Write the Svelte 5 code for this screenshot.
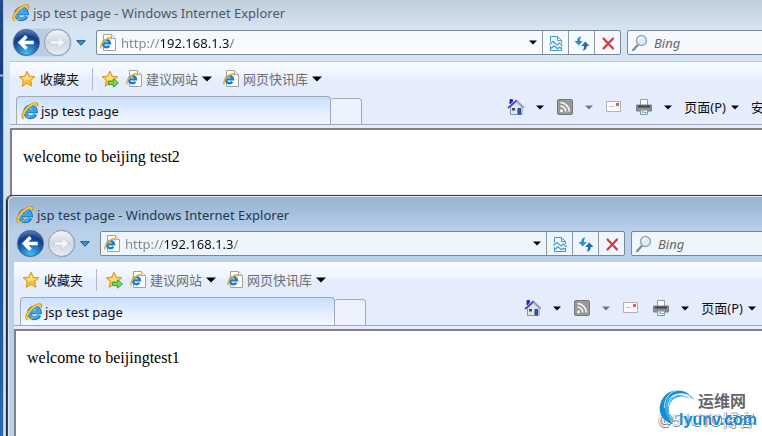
<script>
  const windows = [
    { id: 'back', title: 'jsp test page', url: 'http://192.168.1.3/', body: 'welcome to beijing test2', safety: true },
    { id: 'front', title: 'jsp test page', url: 'http://192.168.1.3/', body: 'welcome to beijingtest1', safety: false }
  ];
</script>

{#snippet ie()}
  <svg class="ie" viewBox="0 0 18 18" aria-hidden="true">
    <path d="M14.4 12.200A5.400 5.400 0 1 1 14.900 9.400H6" fill="none" stroke="#1b6fb8" stroke-width="3.800" />
    <path d="M14 12.200A5.200 5.200 0 1 1 14.600 9.200H6" fill="none" stroke="#35a8ee" stroke-width="2.600" />
    <path d="M2.800 16.300C-.8 14.500 4.500 5.800 10.500 2.700c3.800-2 6.400-1.700 5.300 1.600" fill="none" stroke="#c98f1a" stroke-width="2.600" />
    <path d="M2.800 16C0 14 5 5.800 10.700 2.800c3.500-1.800 5.500-1.500 4.800 1" fill="none" stroke="#ffca35" stroke-width="1.600" />
    <path d="M4.200 16.200c2-.3 3.500-1.300 4.800-2.600" fill="none" stroke="#e3a41f" stroke-width="1.200" />
  </svg>
{/snippet}

{#snippet pageIcon()}
  <svg class="doc" viewBox="0 0 16 17" aria-hidden="true">
    <path d="M3.500.5h8l4 4v12h-12z" fill="#fff" stroke="#a2a2a2" />
    <path d="M11.500.5v4h4" fill="#ececec" stroke="#aaa" />
    <path d="M9.300 11.800A3.600 3.600 0 1 1 10 9.400H4" fill="none" stroke="#1680cf" stroke-width="2.400" />
    <path d="M1.300 14.300C-.6 12.400 3.500 6.500 7.500 4.500c2.500-1.300 4-.8 3.300 1" fill="none" stroke="#efad20" stroke-width="1.500" />
  </svg>
{/snippet}

{#snippet star(add)}
  <svg class="star" viewBox="0 0 18 18" aria-hidden="true">
    <path d="M9 1.200l2.300 5 5.500.6-4.100 3.700 1.200 5.800L9 13.400l-4.900 2.900 1.200-5.800-4.100-3.700 5.500-.6z" fill="#ffc02f" stroke="#dd9420" stroke-linejoin="round" />
    <path d="M9 3.500l1.600 3.700 4 .5-4.300 2.300L9 9.500 6 11l.5-2L3.500 7.700l4-.5z" fill="#ffe48a" />
    {#if add}
      <path d="M7.500 11.200h5V8.700l5 4.200-5 4.200v-2.500h-5z" fill="#6cdb55" stroke="#3f9f38" />
    {/if}
  </svg>
{/snippet}

{#snippet caret(tone)}
  <svg class="caret {tone}" viewBox="0 0 10 6" aria-hidden="true"><path d="M0 .5h10L5 5.5z" /></svg>
{/snippet}

<main class="desktop">
  {#each windows as w (w.id)}
    <section class="window {w.id}" aria-label={w.title}>
      <header class="title">{@render ie()}<span>{w.title} - Windows Internet Explorer</span></header>

      <div class="nav">
        <div class="travel">
          <button class="round go" aria-label="Back">
            <svg viewBox="0 0 26 26"><path d="M13 6.500L6.500 13l6.500 6.500M7.500 13H20.500" fill="none" stroke="#fff" stroke-width="3.600" /></svg>
          </button>
          <button class="round off" aria-label="Forward">
            <svg viewBox="0 0 26 26"><path d="M5.500 11.200h8V6.700l7 6.300-7 6.300v-4.500h-8z" fill="#f4f6f8" stroke="#cbd2d9" /></svg>
          </button>
        </div>
        <button class="recent" aria-label="Recent pages">
          <svg viewBox="0 0 10 6"><path d="M.7.7h8.600L5 5.300z" fill="#3e96c8" stroke="#174f91" /></svg>
        </button>
        <div class="address">
          <div class="field">
            {@render pageIcon()}
            <input class="url" type="text" aria-label="Address" value={w.url} />
            <button class="drop" aria-label="Show addresses">{@render caret('')}</button>
          </div>
          <button class="cell" aria-label="Compatibility view">
            <svg viewBox="0 0 16 18">
              <path d="M2.500 8V2.500h7l4 4V9M9.500 2.500v4h4M2.500 12v4.500h11V13" fill="#e8f6fc" stroke="#3aa1cf" />
              <path d="M1.500 10.500l3.500-3 4 3.500 2.500-2 3 3M3 14.500l3-2.800 3.500 3 2-1.500 2 1.500" fill="none" stroke="#4a9bcd" stroke-width="1.200" />
            </svg>
          </button>
          <button class="cell" aria-label="Refresh">
            <svg viewBox="0 0 16 18">
              <path d="M7.600 2.500C4.500 2.500 3.200 4.200 3.200 7H.5l4.200 4.500L8.800 7H6C6 5 6.300 3.700 7.600 2.500z" fill="#2d8fd0" />
              <path d="M8.400 16.500c3.100 0 4.400-1.700 4.400-4.500h2.700l-4.200-4.500L7.200 12H10c0 2-.3 3.300-1.600 4.500z" fill="#2b69b4" />
            </svg>
          </button>
          <button class="cell" aria-label="Stop">
            <svg viewBox="0 0 16 18"><path d="M3.500 4.500l9.500 10M13 4.500l-9.500 10" fill="none" stroke="#cf3a3f" stroke-width="2.200" stroke-linecap="round" /></svg>
          </button>
        </div>
        <div class="search">
          <svg viewBox="0 0 18 18" aria-hidden="true">
            <path d="M7.200 10.500L2.200 16" stroke="#878b90" stroke-width="2.400" stroke-linecap="round" />
            <circle cx="10.500" cy="6.500" r="5" fill="#d9edfa" stroke="#9aa6b0" stroke-width="1.400" />
            <path d="M7.500 6a3.200 3.200 0 0 1 4-2.600" fill="none" stroke="#fff" stroke-width="1.500" />
          </svg>
          <input type="text" aria-label="Search" placeholder="Bing" />
        </div>
      </div>

      <div class="chrome">
        <div class="favorites">
          <button class="fav strong">{@render star(false)}<span>收藏夹</span></button>
          <i class="rule"></i>
          <button class="add" aria-label="Add to favorites">{@render star(true)}</button>
          <button class="fav">{@render pageIcon()}<span>建议网站</span>{@render caret('')}</button>
          <button class="fav">{@render pageIcon()}<span>网页快讯库</span>{@render caret('')}</button>
        </div>

        <div class="tabs">
          <button class="tab">{@render ie()}<span>{w.title}</span></button>
          <button class="newtab" aria-label="New tab"></button>
          <div class="tools">
            <button aria-label="Home">
              <svg viewBox="0 0 18 18">
                <path d="M3.500 9v7.500h11.500V9L9.500 4z" fill="#dfe5ec" stroke="#8a94a0" />
                <path d="M1 10.200L9.500 2.500l7.500 7.300" fill="none" stroke="#8796d0" stroke-width="1.600" />
                <path d="M3 1.500h2.500v2.300L3 6z" fill="#2524c4" stroke="#2d2dc9" />
                <path d="M1 10L9.500 2.200" fill="none" stroke="#2f31c8" stroke-width="1.200" />
                <path d="M11 10.500h2.500V16H11z" fill="#1d66b3" stroke="#24477b" />
                <path d="M5 10h3v2.500H5z" fill="#46525e" />
              </svg>
              {@render caret('small')}
            </button>
            <button aria-label="Feeds">
              <svg viewBox="0 0 18 18">
                <rect x="1.500" y="1.500" width="15" height="15" rx="1.500" fill="#999" stroke="#777" />
                <circle cx="5.500" cy="12.700" r="1.500" fill="#fff" />
                <path d="M4.500 8.200a5.300 5.300 0 0 1 5.300 5.300M4.500 4.700a8.800 8.800 0 0 1 8.800 8.800" fill="none" stroke="#f5f5f5" stroke-width="1.700" />
              </svg>
              {@render caret('small faded')}
            </button>
            <button aria-label="Read mail">
              <svg viewBox="0 0 18 18">
                <path d="M1.500 3.500h14v10h-14z" fill="#fafafa" stroke="#b6aeb0" />
                <path d="M11 5h3v3h-3z" fill="#e25a5a" /><path d="M4 8.500h5" stroke="#c8c8d0" />
              </svg>
            </button>
            <button aria-label="Print">
              <svg viewBox="0 0 18 18">
                <path d="M5.500 7V1.500h7V7" fill="#fff" stroke="#999" />
                <path d="M1.500 7h15v6h-15z" fill="#8b8f91" stroke="#7b7f82" />
                <path d="M3 8.500h12" stroke="#3f4447" stroke-width="2" />
                <path d="M5.500 12h7v4.500h-7z" fill="#e9f7fb" stroke="#8c969b" />
                <path d="M7 13.500h2v1H7z" fill="#258bd0" /><path d="M9.500 14h2v1h-2z" fill="#4ba75a" />
              </svg>
              {@render caret('small')}
            </button>
            <button class="word"><span>页面(P)</span>{@render caret('small')}</button>
            {#if w.safety}<button class="word">安</button>{/if}
          </div>
        </div>
        <div class="page"><p>{w.body}</p></div>
      </div>
    </section>
  {/each}

  <aside class="mark">
    <span class="blog">@51CTO博客</span>
    <svg viewBox="0 0 44 42" aria-hidden="true">
      <path d="M40 14C33 0 13-2 5 12-3 26 5 37 17 40 10 33 6 24 10 15 15 4 31 3 40 14z" fill="#168bd2" />
      <path d="M40 17C32 6 17 8 13 18c-3 8 0 16 7 21-12-5-14-16-10-24C16 5 32 5 40 17z" fill="#37abe7" />
      <path d="M31 4C18-1 7 8 7 22M36 9C24 3 12 9 11 21" fill="none" stroke="#d9f3ff" />
    </svg>
    <span class="cn">运维网</span>
    <span class="site">lyunv.com</span>
  </aside>
</main>

<style>
  :global(body) { margin: 0; }
  .desktop {
    position: relative;
    height: 100vh;
    overflow: hidden;
    background: linear-gradient(#234b88, #163f80 74px, #a9bdd4 75px, #a9bdd4 76px, #1b4a8b 77px, #1e518f 60%, #2b69ae);
    font: 13px/18px "Noto Sans", "Noto Sans CJK SC", sans-serif;
    color: #111;
  }
  button, input { font: inherit; color: inherit; margin: 0; padding: 0; border: 0; background: none; outline: none; }
  svg { display: block; flex: none; }
  .window {
    position: absolute;
    box-sizing: border-box;
    bottom: -2px;
    display: flex;
    flex-direction: column;
    padding-left: 6px;
    border: 1px solid #49566a;
    border-radius: 6px 0 0 0;
    overflow: hidden;
  }
  .back { left: 3px; right: -3px; top: -7px; --search: 137px; border-color: #b4c6da; background: linear-gradient(#bccbd9, #c6d3e0 14px, #d6e5f4 36px); }
  .front { left: 7px; right: -3px; top: 195px; --search: 133px; border-color: #394453; background: linear-gradient(#99b4d1, #a2bddb 14px, #bad1ec 36px); box-shadow: inset 1px 1px #d8e8f7, -1px 0 1px #101820; }
  .title { display: flex; align-items: center; gap: 3px; height: 30px; padding: 4px 0 2px 2px; box-sizing: content-box; color: #26384b; }
  .back .title { color: #4b5865; }
  .front .title { height: 29px; }
  .ie { width: 18px; height: 18px; }
  .nav { display: flex; align-items: center; height: 25px; margin-bottom: 6px; padding-left: 3px; }
  .travel { display: flex; gap: 4px; border-radius: 14px; background: #bdcde0; box-shadow: 0 0 1px #6f8298; }
  .round { width: 27px; height: 27px; border-radius: 50%; box-sizing: border-box; }
  .round svg { width: 100%; height: 100%; }
  .go { border: 1px solid #3a6192; background: radial-gradient(circle at 50% 95%, #3fc2f5, #1c60b3 45%, #123a87 65%, #7aa0d4); }
  .off { border: 1px solid #8d9bab; background: linear-gradient(#f1f5f8, #cfd8e1 50%, #e6ecf2); }
  .recent { width: 10px; margin: 0 10px 0 5px; }
  .recent svg { width: 10px; height: 6px; }
  .address { display: flex; flex: 1; min-width: 0; height: 25px; box-sizing: border-box; border: 1px solid #7c8791; border-radius: 2px; background: linear-gradient(#f3f7fd, #fbfcff); }
  .front .address, .front .search { background: #eff5fd; }
  .field { display: flex; flex: 1; min-width: 0; align-items: center; padding-left: 3px; }
  .doc { width: 16px; height: 17px; }
  .url {
    flex: 1;
    min-width: 0;
    height: 20px;
    margin-left: 5px;
    color: transparent;
    background: linear-gradient(90deg, #858585 39px, #111 39px, #111 109px, #777 109px);
    background-clip: text;
    -webkit-background-clip: text;
  }
  .drop { width: 18px; display: flex; justify-content: center; }
  .caret { width: 10px; height: 6px; fill: #000; }
  .drop .caret, .small { width: 8px; height: 5px; }
  .faded { fill: #777; }
  .cell { width: 26px; display: flex; align-items: center; justify-content: center; border-left: 1px solid #8d979f; }
  .cell svg { width: 16px; height: 18px; }
  .search { display: flex; align-items: center; gap: 5px; width: var(--search); height: 25px; box-sizing: border-box; margin-left: 6px; padding-left: 3px; border: 1px solid #7c8791; border-radius: 2px; background: #f5f9fe; }
  .search svg { width: 18px; height: 18px; }
  .search input { min-width: 0; flex: 1; font-style: italic; }
  .search input::placeholder { color: #666; opacity: 1; }
  .chrome { display: flex; flex-direction: column; flex: 1; min-height: 0; background: linear-gradient(#f8fbff, #f0f6ff 14px, #e5edfd 18px); }
  .favorites { display: flex; align-items: center; height: 33px; padding-left: 8px; border-top: 1px solid #b9c7d3; }
  .front .favorites { border-color: #f8fcff; }
  .star { width: 18px; height: 18px; }
  .fav { display: flex; align-items: center; gap: 4px; margin-right: 11px; color: #707070; white-space: nowrap; }
  .strong { color: #111; margin-right: 13px; }
  .rule { width: 1px; height: 22px; background: #b5b9c2; margin-right: 8px; }
  .add { margin-right: 7px; }
  .tabs { display: flex; align-items: end; height: 29px; padding-left: 6px; border-bottom: 1px solid #a5a9b6; }
  .tab { display: flex; align-items: center; gap: 2px; width: 315px; height: 28px; box-sizing: border-box; padding-left: 4px; border: 1px solid #a3a8b5; border-bottom: 0; border-radius: 4px 4px 0 0; background: linear-gradient(#c8dfff, #e5efff 60%, #f5f8ff); }
  .newtab { width: 31px; height: 26px; box-sizing: border-box; border: 1px solid #a3a8b5; border-left: 0; border-bottom: 0; border-radius: 3px 4px 0 0; background: #edf2fe; }
  .tools { display: flex; align-items: center; height: 34px; margin-left: auto; gap: 12px; white-space: nowrap; }
  .front .tools { padding-right: 8px; }
  .tools button { display: flex; align-items: center; gap: 11px; }
  .tools svg:not(.caret) { width: 18px; height: 18px; }
  .tools .word { gap: 5px; }
  .page { flex: 1; min-height: 0; margin-top: 3px; border: 2px solid #7e8185; border-right: 0; border-bottom: 0; background: #fff; }
  .page p { margin: 17px 11px; font: 16px/20px "Liberation Serif", serif; color: #000; }
  .mark { position: absolute; right: 4px; bottom: 6px; width: 104px; height: 44px; line-height: 20px; white-space: nowrap; }
  .mark svg { position: absolute; left: 4px; top: 1px; width: 40px; height: 40px; }
  .mark span { position: absolute; }
  .blog { right: 4px; bottom: 0; font-size: 16px; color: #fff; text-shadow: 1px 0 #777, 0 1px #777, -1px 0 #ccc; }
  .cn { right: 12px; top: 5px; font-size: 16px; font-weight: 700; color: #62666d; }
  .site { right: 1px; bottom: 0; font: bold 16px/20px "Liberation Sans", sans-serif; color: #168bdc; }
</style>
